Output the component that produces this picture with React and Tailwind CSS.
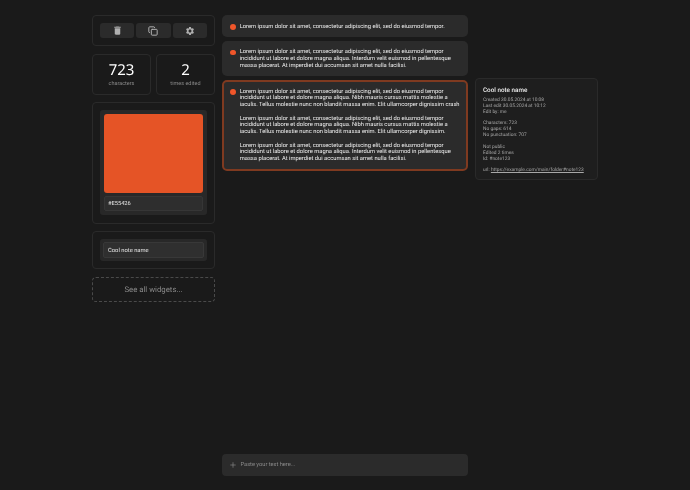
import { Copy, Plus } from 'lucide-react';
import { MdDelete, MdSettings } from 'react-icons/md';

const notes = [
    ['Lorem ipsum dolor sit amet, consectetur adipiscing elit, sed do eiusmod tempor.'],
    ['Lorem ipsum dolor sit amet, consectetur adipiscing elit, sed do eiusmod tempor incididunt ut labore et dolore magna aliqua. Interdum velit euismod in pellentesque massa placerat. At imperdiet dui accumsan sit amet nulla facilisi.'],
];

const selected = [
    'Lorem ipsum dolor sit amet, consectetur adipiscing elit, sed do eiusmod tempor incididunt ut labore et dolore magna aliqua. Nibh mauris cursus mattis molestie a iaculis. Tellus molestie nunc non blandit massa enim. Elit ullamcorper dignissim crash',
    'Lorem ipsum dolor sit amet, consectetur adipiscing elit, sed do eiusmod tempor incididunt ut labore et dolore magna aliqua. Nibh mauris cursus mattis molestie a iaculis. Tellus molestie nunc non blandit massa enim. Elit ullamcorper dignissim.',
    'Lorem ipsum dolor sit amet, consectetur adipiscing elit, sed do eiusmod tempor incididunt ut labore et dolore magna aliqua. Interdum velit euismod in pellentesque massa placerat. At imperdiet dui accumsan sit amet nulla facilisi.',
];

function Card({ className = '', children }) {
    return <div className={`rounded-[4px] border border-[#2a2a2a] ${className}`}>{children}</div>;
}

function ToolButton({ children }) {
    return <div className="flex h-[15px] flex-1 items-center justify-center rounded-[3px] bg-[#2b2b2b] text-[#b0b0b0]">{children}</div>;
}

function Stat({ value, label }) {
    return (
        <Card className="flex h-[41px] flex-1 flex-col items-center pt-[7px]">
            <div className="text-[15px] leading-[17px] text-white font-['Noto_Sans',sans-serif]">{value}</div>
            <div className="mt-[2px] text-[5.5px] leading-[7px] text-[#8a8a8a]">{label}</div>
        </Card>
    );
}

function Note({ children, active }) {
    return (
        <div className={`flex gap-[4.2px] rounded-[5px] bg-[#2b2b2b] ${active ? 'border-2 border-[#7f3a20] pt-[6.5px] pb-[6px] pl-[6px] pr-[6px]' : 'pt-[8.5px] pb-[6.5px] pl-[8px] pr-[8px]'}`}>
            <div className="mt-[0.5px] h-[5.5px] w-[5.5px] shrink-0 rounded-full bg-[#f0562a]" />
            <div className="flex flex-col gap-[6.75px] text-[5.78px] leading-[6.75px] text-[#f0f0f0]">{children}</div>
        </div>
    );
}

export default function App() {
    return (
        <div className="flex h-[490px] w-[690px] gap-[7px] overflow-hidden bg-[#1a1a1a] pl-[92px] pt-[15px] pb-[14px] font-['Roboto',sans-serif] [text-rendering:geometricPrecision] will-change-transform">
            <div className="flex w-[123px] shrink-0 flex-col">
                <Card className="flex h-[31px] items-center gap-[2px] px-[7px]">
                    <ToolButton><MdDelete size={11} /></ToolButton>
                    <ToolButton><Copy size={10} strokeWidth={2.4} /></ToolButton>
                    <ToolButton><MdSettings size={10} /></ToolButton>
                </Card>
                <div className="mt-[8px] flex gap-[5px]">
                    <Stat value="723" label="characters" />
                    <Stat value="2" label="times edited" />
                </div>
                <Card className="mt-[7px] h-[122px] p-[7px]">
                    <div className="rounded-[3px] bg-[#282828] p-[4px]">
                        <div className="h-[79px] rounded-[3px] bg-[#e55426]" />
                        <div className="mt-[3px] flex h-[15px] items-center rounded-[2px] border border-[#363636] bg-[#2e2e2e] px-[3px] pt-[2px] text-[5.7px] text-[#e4e4e4]">#E55426</div>
                    </div>
                </Card>
                <Card className="mt-[7px] h-[38px] p-[7px]">
                    <div className="h-[22px] rounded-[3px] bg-[#282828] p-[3px]">
                        <div className="flex h-[16px] items-center rounded-[2px] border border-[#383838] bg-[#2f2f2f] px-[4px] pt-[2px] text-[5.8px] text-[#e4e4e4]">Cool note name</div>
                    </div>
                </Card>
                <div className="mt-[8px] flex h-[25px] items-center justify-center rounded-[4px] border border-dashed border-[#4a4a4a] text-[7.8px] text-[#8a8a8a]">See all widgets...</div>
            </div>

            <div className="flex w-[246px] shrink-0 flex-col">
                <div className="flex flex-col gap-[4px]">
                    {notes.map((n, i) => <Note key={i}><p>{n[0]}</p></Note>)}
                    <Note active>{selected.map((t, i) => <p key={i}>{t}</p>)}</Note>
                </div>
                <div className="mt-auto flex h-[22px] items-center gap-[3.5px] rounded-[4px] bg-[#2b2b2b] px-[7px] text-[5.7px] text-[#8a8a8a]">
                    <Plus size={8} />
                    <span>Paste your text here...</span>
                </div>
            </div>

            <div className="mt-[63px] h-[102px] w-[123px] shrink-0 rounded-[4px] border border-[#2a2a2a] bg-[#1e1e1e] px-[7px] pt-[7px] text-[4.85px] leading-[6px] text-[#a8a8a8]">
                <div className="mb-[2.5px] text-[6.3px] leading-[9px] font-medium text-[#eee]">Cool note name</div>
                <div>Created 30.05.2024 at 10:08</div>
                <div>Last edit 30.05.2024 at 10:12</div>
                <div>Edit by: me</div>
                <div className="mt-[5.5px]">Characters: 723</div>
                <div>No gaps: 614</div>
                <div>No punctuation: 707</div>
                <div className="mt-[5.5px]">Not public</div>
                <div>Edited 2 times</div>
                <div>Id: #note123</div>
                <div className="mt-[5.5px]">url: <span className="underline">https://example.com/main/folder#note123</span></div>
            </div>
        </div>
    );
}
